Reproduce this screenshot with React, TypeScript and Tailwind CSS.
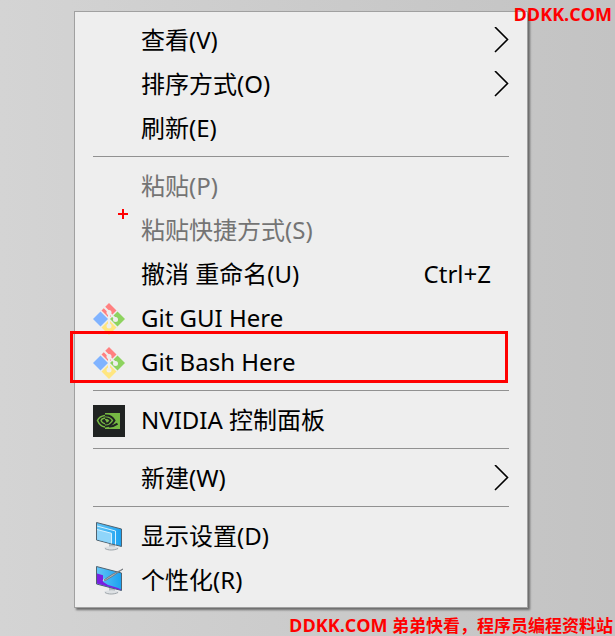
import type { ReactNode } from "react";

type Item = {
  label: string;
  icon?: ReactNode;
  shortcut?: string;
  submenu?: boolean;
  disabled?: boolean;
  marked?: boolean;
};

export default function App() {
  return (
    <div className="relative flex min-h-screen flex-col justify-between overflow-hidden bg-linear-to-r from-[#d4d4d4] via-[#cbcbcb] to-[#c3c3c3] font-['Noto_Sans','Noto_Sans_CJK_SC',sans-serif]">
      <div className="pt-[11px] pr-[87px] pl-[74px]">
        <div
          role="menu"
          className="relative border border-[#a0a0a0] bg-[#eeeeee] pt-[7px] pb-1 shadow-[2px_2px_2px_#6a6a6a]"
        >
          {groups.map((items, i) => (
            <div key={i}>
              {i > 0 && <hr className="mt-[5px] mr-[18px] mb-2 ml-[18px] border-[#919191]" />}
              {items.map((item) => (
                <MenuItem key={item.label} item={item} />
              ))}
            </div>
          ))}
          <Cursor />
        </div>
      </div>
      <div className="absolute top-0 right-[3px] font-['Open_Sans',sans-serif] text-[18px] leading-7 font-bold text-[#ff0000]">
        DDKK.COM
      </div>
      <footer className="pr-0.5 text-right font-['Open_Sans','Noto_Sans_CJK_SC',sans-serif] text-[17px] leading-5 font-bold whitespace-nowrap text-[#ff0000]">
        <span className="text-[18px]">DDKK.COM</span> 弟弟快看，程序员编程资料站
      </footer>
    </div>
  );
}

function MenuItem({ item }: { item: Item }) {
  return (
    <button
      type="button"
      role="menuitem"
      disabled={item.disabled}
      className="relative flex h-11 w-full items-center px-[18px] text-left text-2xl whitespace-nowrap text-black disabled:text-[#747474]"
    >
      <span className="mr-4 size-8 shrink-0">{item.icon}</span>
      <span className="grow pb-0.5">{item.label}</span>
      {item.shortcut && <span className="mr-[18px] pb-0.5">{item.shortcut}</span>}
      {item.submenu && <Chevron />}
      {item.marked && (
        <span className="absolute -top-[10px] right-[19px] -left-[5px] h-[52px] border-3 border-[#ff0000]" />
      )}
    </button>
  );
}

function Chevron() {
  return (
    <svg viewBox="0 0 16 28" className="h-7 w-4 shrink-0" fill="none" aria-hidden="true">
      <path d="M2 0 14.500 12.500 2 25" stroke="#000" strokeWidth="1.600" />
    </svg>
  );
}

function Cursor() {
  return (
    <svg viewBox="0 0 10 10" className="absolute top-[197px] left-[43px] size-[10px]" aria-hidden="true">
      <path d="M4 0h2v4h4v2H6v4H4V6H0V4h4z" fill="#f00" />
    </svg>
  );
}

function GitIcon() {
  return (
    <svg viewBox="0 0 32 32" className="size-8" aria-hidden="true">
      <path d="M16 0 23.500 7.500 16 15 8.500 7.500z" fill="#ff8080" />
      <path d="M7.500 8.500 15 16 7.500 23.500 0 16z" fill="#80b3ff" />
      <path d="M24.500 8.500 32 16 24.500 23.500 17 16z" fill="#8dd35f" />
      <path d="M16 17 23.500 24.500 16 32 8.500 24.500z" fill="#ffe680" />
      <path d="M11 4 16 9V23M16 10l7 6" stroke="#eee" strokeWidth="2" fill="none" />
      <circle cx="16" cy="9.500" r="2.500" fill="#eee" />
      <circle cx="16" cy="23" r="2.500" fill="#eee" />
      <circle cx="22.500" cy="16.500" r="2.500" fill="#eee" />
    </svg>
  );
}

function NvidiaIcon() {
  return (
    <svg viewBox="0 0 32 32" className="size-8" aria-hidden="true">
      <path d="M0 0h32v32H0z" fill="#202322" />
      <path d="M12 8h15v16H12z" fill="#76b943" />
      <path d="M12 10.500C8 11 5.500 13 4.500 15.500 6 19 8.500 21.500 12 22" stroke="#76b943" strokeWidth="1.600" fill="none" />
      <path d="M12 10.500c4.500-.5 8 2 9.500 5-2 3.500-5.500 6-9.500 6" stroke="#202322" strokeWidth="2" fill="none" />
      <path d="M12 13c-2.500.3-3.700 1.500-4 2.800.8 1.700 2 2.700 4 3" stroke="#76b943" strokeWidth="1.400" fill="none" />
      <path d="M12 13c3 0 4.500 1 5.500 2.500-1.500 2.200-3 3.400-4.500 3.200l-1-3.200" stroke="#202322" strokeWidth="1.700" fill="none" />
      <path d="M16 21.500c3 .5 5.500-.8 8.500-2.800" stroke="#202322" strokeWidth="2" fill="none" />
    </svg>
  );
}

function Monitor({ children }: { children: ReactNode }) {
  return (
    <svg viewBox="0 0 32 32" className="size-8" aria-hidden="true">
      <defs>
        <linearGradient id="screen" x1="0" y1="0" x2="1" y2="0">
          <stop offset="0" stopColor="#63c5f6" />
          <stop offset="1" stopColor="#1ba1f0" />
        </linearGradient>
      </defs>
      <path d="m16 22 6 1v4h-6z" fill="#b4babe" />
      <ellipse cx="18.500" cy="27" rx="7.500" ry="1.800" fill="#dde1e4" />
      <path d="M12 27.500c3 2 9 2 13 0" stroke="#9ca3a8" fill="none" />
      <path d="M3.500 1.500 28.500 8v17.500L3.500 19z" fill="url(#screen)" stroke="#50626f" />
      {children}
    </svg>
  );
}

function DisplayIcon() {
  return (
    <Monitor>
      <path d="M4 8.500 18.500 12v10.500L4 18.600z" fill="#8fd5fa" />
      <path d="m4 5 18.500 5v13.500M4 8.500 18.500 12.300V22.500" stroke="#d5f1ff" fill="none" />
    </Monitor>
  );
}

function PersonalizeIcon() {
  return (
    <Monitor>
      <path d="m4 8.500 6 1.700v6.600l5 3.200 10 3 3 1.500v.8L4 18.600z" fill="#7a1fe0" />
      <path d="m9.500 16 1.500-2.500 2.500 1.500z" fill="#e5e8eb" />
      <path d="m11 15 8-5.500L30 4l-10 7-7.500 4.500z" fill="#b1b5b9" stroke="#6d7176" strokeWidth=".8" />
    </Monitor>
  );
}

const groups: Item[][] = [
  [
    { label: "查看(V)", submenu: true },
    { label: "排序方式(O)", submenu: true },
    { label: "刷新(E)" },
  ],
  [
    { label: "粘贴(P)", disabled: true },
    { label: "粘贴快捷方式(S)", disabled: true },
    { label: "撤消 重命名(U)", shortcut: "Ctrl+Z" },
    { label: "Git GUI Here", icon: <GitIcon /> },
    { label: "Git Bash Here", icon: <GitIcon />, marked: true },
  ],
  [{ label: "NVIDIA 控制面板", icon: <NvidiaIcon /> }],
  [{ label: "新建(W)", submenu: true }],
  [
    { label: "显示设置(D)", icon: <DisplayIcon /> },
    { label: "个性化(R)", icon: <PersonalizeIcon /> },
  ],
];
